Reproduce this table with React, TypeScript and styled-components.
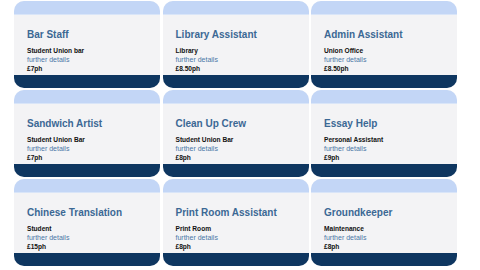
import React from "react";
import styled, { createGlobalStyle } from "styled-components";

const GlobalStyle = createGlobalStyle`
  html, body {
    margin: 0;
    padding: 0;
    background: #ffffff;
    font-family: "Liberation Sans", Arial, sans-serif;
  }
`;

const Grid = styled.div`
  display: grid;
  grid-template-columns: repeat(3, 146px);
  grid-auto-rows: 87px;
  column-gap: 2.5px;
  row-gap: 2px;
  padding: 1px 0 0 14px;
`;

const CardBox = styled.article`
  display: flex;
  flex-direction: column;
  border-radius: 10px;
  overflow: hidden;
  background: #f3f3f5;
`;

const Top = styled.div`
  height: 13px;
  background: #c3d6f6;
  border-bottom: 1px solid #d9e5f8;
`;

const Body = styled.section`
  flex: 1;
  padding: 14px 13px 0;
  background: #f3f3f5;
`;

const Title = styled.h2`
  margin: 0 0 5px;
  font-size: 10px;
  line-height: 12px;
  font-weight: 700;
  color: #3b6894;
  white-space: nowrap;
`;

const Line = styled.div<{ $kind?: "bold" | "link" }>`
  font-size: ${(p) => (p.$kind === "link" ? "7px" : "6.6px")};
  line-height: 9px;
  font-weight: ${(p) => (p.$kind === "link" ? 400 : 700)};
  color: ${(p) => (p.$kind === "link" ? "#4a77a6" : "#111111")};
  white-space: nowrap;
`;

const Bottom = styled.div`
  height: 13px;
  background: #0e3660;
`;

const jobs = [
  { title: "Bar Staff", place: "Student Union bar", pay: "£7ph" },
  { title: "Library Assistant", place: "Library", pay: "£8.50ph" },
  { title: "Admin Assistant", place: "Union Office", pay: "£8.50ph" },
  { title: "Sandwich Artist", place: "Student Union Bar", pay: "£7ph" },
  { title: "Clean Up Crew", place: "Student Union Bar", pay: "£8ph" },
  { title: "Essay Help", place: "Personal Assistant", pay: "£9ph" },
  { title: "Chinese Translation", place: "Student", pay: "£15ph" },
  { title: "Print Room Assistant", place: "Print Room", pay: "£8ph" },
  { title: "Groundkeeper", place: "Maintenance", pay: "£8ph" },
];

const JobCard = ({ title, place, pay }: { title: string; place: string; pay: string }) => (
  <CardBox>
    <Top />
    <Body>
      <Title>{title}</Title>
      <Line>{place}</Line>
      <Line $kind="link">further details</Line>
      <Line>{pay}</Line>
    </Body>
    <Bottom />
  </CardBox>
);

export default function App() {
  return (
    <>
      <GlobalStyle />
      <Grid>
        {jobs.map((j) => (
          <JobCard key={j.title} {...j} />
        ))}
      </Grid>
    </>
  );
}
